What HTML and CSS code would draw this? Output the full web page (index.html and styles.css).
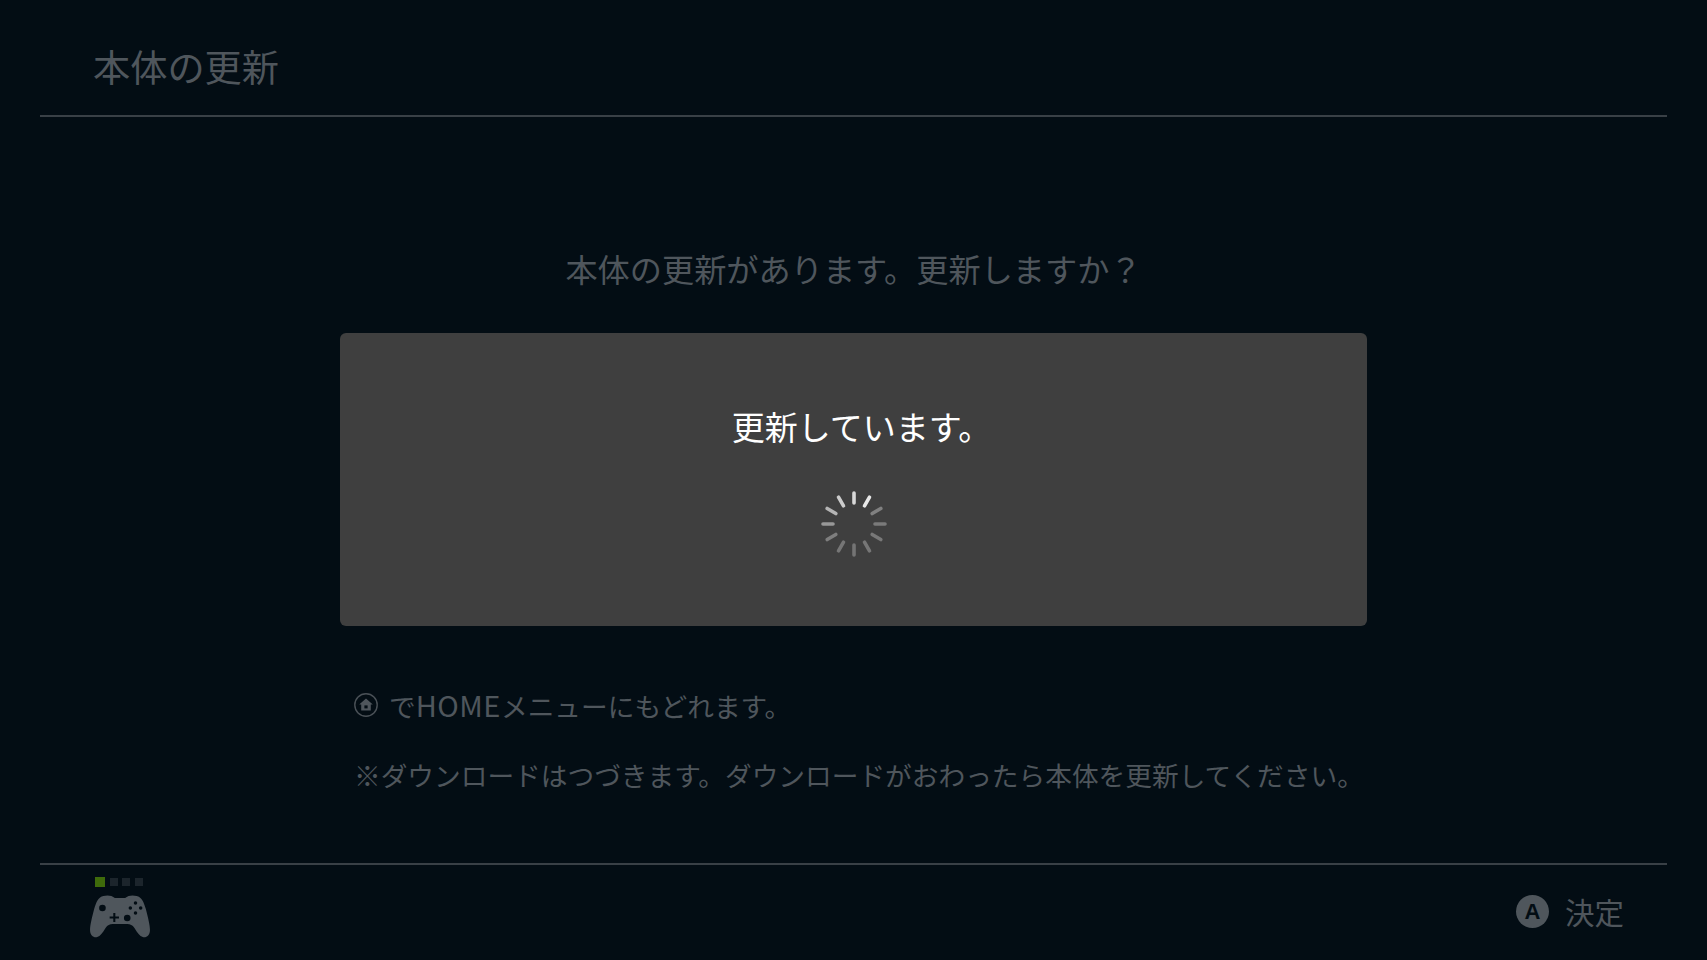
FILE: index.html
```html
<!DOCTYPE html>
<html lang="ja">
<head>
  <meta charset="UTF-8">
  <title>本体の更新</title>
  <link rel="stylesheet" href="styles.css">
</head>
<body>
<div id="page">
  <div id="header"><h1 id="title">本体の更新</h1></div>

  <div id="content">
    <p id="question">本体の更新があります。更新しますか？</p>

    <div id="dialog">
      <p id="dialogText">更新しています。</p>
      <svg id="spinner" width="70" height="70" viewBox="-35 -35 70 70">
        <g stroke-width="3.6" stroke-linecap="round" fill="none">
          <line x1="0" y1="-21" x2="0" y2="-31" stroke="#d8d8d8"/>
          <line x1="10.5" y1="-18.2" x2="15.5" y2="-26.8" stroke="#e8e8e8"/>
          <line x1="18.2" y1="-10.5" x2="26.8" y2="-15.5" stroke="#808080"/>
          <line x1="21" y1="0" x2="31" y2="0" stroke="#7a7a7a"/>
          <line x1="18.2" y1="10.5" x2="26.8" y2="15.5" stroke="#787878"/>
          <line x1="10.5" y1="18.2" x2="15.5" y2="26.8" stroke="#767676"/>
          <line x1="0" y1="21" x2="0" y2="31" stroke="#747474"/>
          <line x1="-10.5" y1="18.2" x2="-15.5" y2="26.8" stroke="#767676"/>
          <line x1="-18.2" y1="10.5" x2="-26.8" y2="15.5" stroke="#7e7e7e"/>
          <line x1="-21" y1="0" x2="-31" y2="0" stroke="#989898"/>
          <line x1="-18.2" y1="-10.5" x2="-26.8" y2="-15.5" stroke="#b4b4b4"/>
          <line x1="-10.5" y1="-18.2" x2="-15.5" y2="-26.8" stroke="#cccccc"/>
        </g>
      </svg>
    </div>

    <div id="notes">
      <p class="note">
        <svg class="homeIcon" width="24" height="26" viewBox="0 0 24 26">
          <circle cx="12" cy="13" r="11.2" fill="none" stroke="#4a5157" stroke-width="1.4"/>
          <path d="M12 6.4 L18.8 12.6 L16.8 12.6 L16.8 18.6 L7.2 18.6 L7.2 12.6 L5.2 12.6 Z" fill="#4f565c"/>
          <rect x="10.4" y="13.4" width="3.2" height="3" fill="#030d14"/>
        </svg>
        <span>で<span class="latin">HOME</span>メニューにもどれます。</span>
      </p>
      <p class="note">※ダウンロードはつづきます。ダウンロードがおわったら本体を更新してください。</p>
    </div>
  </div>

  <div id="footer">
    <div id="player">
      <div id="leds">
        <span class="led on"></span><span class="led"></span><span class="led"></span><span class="led"></span>
      </div>
      <svg id="pad" width="62" height="44" viewBox="0 0 60 44" preserveAspectRatio="none">
        <path d="M14 1 C17 0 22 0 25 3 L35 3 C38 0 43 0 46 1 C51 2 53 7 55 14 C57 22 59 30 59 35 C59 41 55 43 52 42 C49 41 47 38 44 33 C42 30 40 29 37 29 L23 29 C20 29 18 30 16 33 C13 38 11 41 8 42 C5 43 1 41 1 35 C1 30 3 22 5 14 C7 7 9 2 14 1 Z" fill="#4f565c"/>
        <circle cx="13" cy="13" r="3.2" fill="#030d14"/>
        <circle cx="37" cy="23" r="3.2" fill="#030d14"/>
        <path d="M20 21.5 H23.5 V18 H25.5 V21.5 H29 V23.5 H25.5 V27 H23.5 V23.5 H20 Z" fill="#030d14"/>
        <circle cx="45" cy="8" r="1.7" fill="#030d14"/>
        <circle cx="45" cy="18" r="1.7" fill="#030d14"/>
        <circle cx="40" cy="13" r="1.7" fill="#030d14"/>
        <circle cx="50" cy="13" r="1.7" fill="#030d14"/>
      </svg>
    </div>
    <div id="action">
      <span id="aButton">A</span>
      <span id="actionLabel">決定</span>
    </div>
  </div>
</div>
</body>
</html>
```

FILE: styles.css
```css
* { margin: 0; padding: 0; box-sizing: border-box; }
html, body { height: 100%; width: 100%; overflow: hidden; background: #030d14; }
body { font-family: "Noto Sans CJK JP", "Noto Sans", sans-serif; color: #4f565c; }

#page {
  width: 1707px;
  height: 960px;
  display: flex;
  flex-direction: column;
  padding: 0 40px;
}

#header {
  height: 117px;
  flex: none;
  border-bottom: 2px solid #394046;
  padding: 42px 0 0 53px;
}
#title { font-size: 37.2px; font-weight: 400; line-height: 48px; }

#content {
  flex: 1;
  display: flex;
  flex-direction: column;
  align-items: center;
}

#question {
  margin-top: 128px;
  font-size: 32.2px;
  line-height: 46px;
  height: 88px;
}

#dialog {
  width: 1027px;
  height: 293px;
  border-radius: 6px;
  background: #3f3f3f;
  display: flex;
  flex-direction: column;
  align-items: center;
  padding-top: 69px;
}
#dialogText { font-size: 33px; line-height: 48px; color: #fff; padding-left: 16px; }
#spinner { margin-top: 39px; }

#notes {
  width: 1027px;
  padding: 59px 0 0 14px;
  display: flex;
  flex-direction: column;
  gap: 30px;
}
.note {
  display: flex;
  align-items: center;
  gap: 11px;
  font-size: 26.7px;
  line-height: 39px;
  white-space: nowrap;
}
.latin { font-size: 29px; letter-spacing: 0.5px; }

#footer {
  height: 97px;
  flex: none;
  border-top: 2px solid #394046;
  display: flex;
  justify-content: space-between;
  padding: 12px 43px 0 49px;
}

#player { display: flex; flex-direction: column; gap: 8px; }
#leds { display: flex; align-items: center; gap: 4.6px; padding-left: 6px; }
.led { width: 8px; height: 8px; background: #1c252c; }
.led.on { width: 10px; height: 10px; background: #3f6b0b; }

#action {
  display: flex;
  align-items: center;
  gap: 16px;
  height: 48px;
  margin-top: 10px;
}
#aButton {
  width: 33px;
  height: 33px;
  border-radius: 50%;
  background: #4f565c;
  color: #030d14;
  font-family: "Liberation Sans", sans-serif;
  font-size: 22px;
  font-weight: 700;
  line-height: 33px;
  text-align: center;
}
#actionLabel { font-size: 29.5px; line-height: 40px; }
```
